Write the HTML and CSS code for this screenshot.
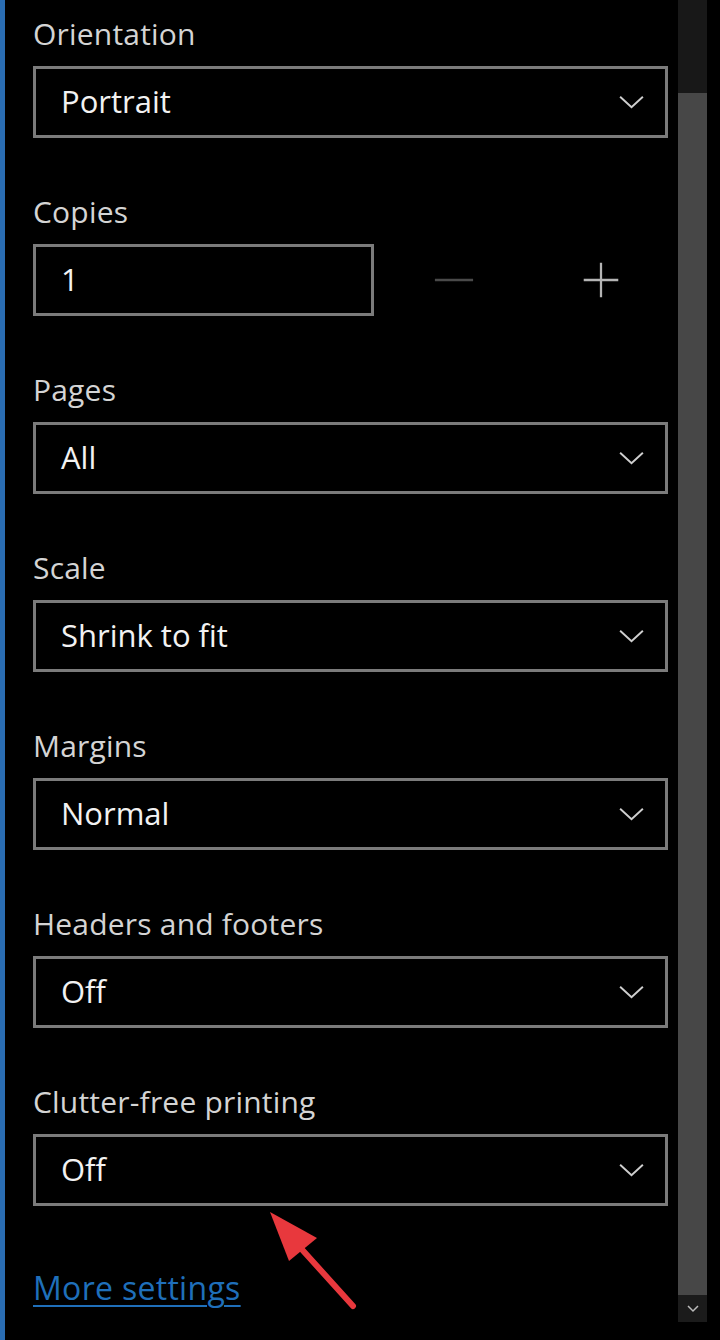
FILE: index.html
```html
<!DOCTYPE html>
<html lang="en">
<head>
  <meta charset="UTF-8" />
  <title>Print settings</title>
  <link rel="stylesheet" href="styles.css">
</head>
<body>

  <!-- ===== Accent strip ===== -->
  <div class="accent"></div>

  <!-- ===== Settings panel ===== -->
  <main class="panel">
    <div class="field">
      <label>Orientation</label>
      <div class="select"><span>Portrait</span><svg class="chev" viewBox="0 0 30 16"><path d="M2 2 L15 14 L28 2"/></svg></div>
    </div>

    <div class="field">
      <label>Copies</label>
      <div class="copies-row">
        <div class="select small"><span>1</span></div>
        <svg class="step minus" viewBox="0 0 44 44"><path d="M2 22 H42"/></svg>
        <svg class="step plus" viewBox="0 0 44 44"><path d="M3 22 H41 M22 3 V41"/></svg>
      </div>
    </div>

    <div class="field">
      <label>Pages</label>
      <div class="select"><span>All</span><svg class="chev" viewBox="0 0 30 16"><path d="M2 2 L15 14 L28 2"/></svg></div>
    </div>

    <div class="field">
      <label>Scale</label>
      <div class="select"><span>Shrink to fit</span><svg class="chev" viewBox="0 0 30 16"><path d="M2 2 L15 14 L28 2"/></svg></div>
    </div>

    <div class="field">
      <label>Margins</label>
      <div class="select"><span>Normal</span><svg class="chev" viewBox="0 0 30 16"><path d="M2 2 L15 14 L28 2"/></svg></div>
    </div>

    <div class="field">
      <label>Headers and footers</label>
      <div class="select"><span>Off</span><svg class="chev" viewBox="0 0 30 16"><path d="M2 2 L15 14 L28 2"/></svg></div>
    </div>

    <div class="field last">
      <label>Clutter-free printing</label>
      <div class="select"><span>Off</span><svg class="chev" viewBox="0 0 30 16"><path d="M2 2 L15 14 L28 2"/></svg></div>
    </div>

    <a href="#" class="more">More settings</a>

    <!-- annotation arrow -->
    <svg class="pointer" viewBox="0 0 92 104">
      <path class="shaft" d="M86 98 L30 36"/>
      <path class="head" d="M3 4 L50 30 L22 53 Z"/>
    </svg>
  </main>

  <!-- ===== Scrollbar ===== -->
  <div class="scrollbar">
    <div class="track-top"></div>
    <div class="thumb"></div>
    <div class="track-end"><svg viewBox="0 0 12 8"><path d="M1 1 L6 6 L11 1"/></svg></div>
  </div>

</body>
</html>
```

FILE: styles.css
```css
body {
  margin: 0;
  background: #000;
  color: #e6e6e6;
  font-family: 'Open Sans', 'Noto Sans', sans-serif;
  display: flex;
  height: 1340px;
  overflow: hidden;
}

.accent {
  width: 5px;
  background: #2a6db3;
}

/* ===== Panel ===== */
.panel {
  position: relative;
  width: 635px;
  padding: 14px 0 0 28px;
}
.field { margin-bottom: 54px; }
.field.last { margin-bottom: 62px; }
.field label {
  display: block;
  font-size: 30px;
  line-height: 40px;
  color: #d4d4d4;
  margin-bottom: 12px;
  letter-spacing: 0.2px;
}
.select {
  box-sizing: border-box;
  height: 72px;
  border: 3px solid #7b7b7b;
  display: flex;
  align-items: center;
  justify-content: space-between;
  padding: 0 20px 0 25px;
  font-size: 31px;
  color: #f2f2f2;
}
.select span { margin-top: -2px; }
.chev {
  width: 27px;
  height: 14px;
  fill: none;
  stroke: #cfcfcf;
  stroke-width: 2.2;
}

/* ===== Copies ===== */
.copies-row {
  display: flex;
  align-items: center;
}
.select.small { width: 341px; }
.step {
  width: 42px;
  height: 42px;
  fill: none;
  stroke-width: 2.5;
}
.minus { margin-left: 59px; stroke: #4a4a4a; }
.plus { margin-left: 106px; stroke: #b5b5b5; width: 40px; height: 40px; }

/* ===== Link ===== */
.more {
  display: inline-block;
  font-size: 32px;
  line-height: 40px;
  color: #1f6fba;
  text-decoration: underline;
  text-underline-offset: 5px;
  text-decoration-thickness: 2px;
  letter-spacing: 0.3px;
}

.pointer {
  position: absolute;
  left: 262px;
  top: 1208px;
  width: 92px;
  height: 104px;
}
.pointer .shaft { stroke: #e8383d; stroke-width: 6; stroke-linecap: round; fill: none; }
.pointer .head { fill: #e8383d; }

/* ===== Scrollbar ===== */
.scrollbar {
  width: 29px;
  margin-left: 10px;
  display: flex;
  flex-direction: column;
  height: 1322px;
}
.track-top { height: 93px; background: #181818; }
.thumb { flex: 1; background: #474747; }
.track-end {
  height: 27px;
  background: #1b1b1b;
  display: flex;
  align-items: center;
  justify-content: center;
}
.track-end svg {
  width: 12px;
  height: 8px;
  fill: none;
  stroke: #bbb;
  stroke-width: 1.5;
}
```
